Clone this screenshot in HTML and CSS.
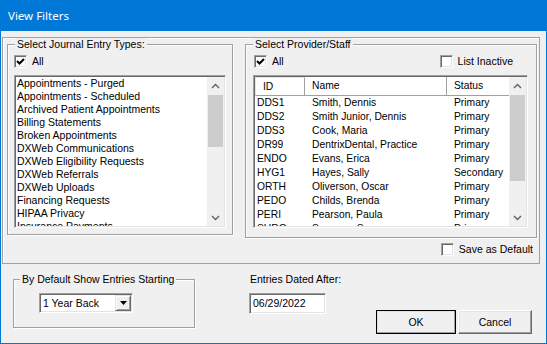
FILE: index.html
```html
<!DOCTYPE html>
<html lang="en">
<head>
    <meta charset="UTF-8">
    <title>View Filters</title>
    <link rel="stylesheet" href="styles.css">
</head>
<body>
    <div class="window">
        <!-- Title bar -->
        <div class="titlebar">View Filters</div>

        <!-- Upper panel with the two lists -->
        <div class="panel">
            <div class="groups">
                <fieldset class="group group-types">
                    <legend>Select Journal Entry Types:</legend>
                    <div class="group-body">
                        <label class="check-row">
                            <span class="check"><svg width="9" height="9" viewBox="0 0 9 9"><path d="M1 4 L3.5 6.5 L8 2" fill="none" stroke="#000" stroke-width="2"/></svg></span>
                            All
                        </label>
                        <div class="listbox">
                            <ul class="list-items">
                                <li>Appointments - Purged</li>
                                <li>Appointments - Scheduled</li>
                                <li>Archived Patient Appointments</li>
                                <li>Billing Statements</li>
                                <li>Broken Appointments</li>
                                <li>DXWeb Communications</li>
                                <li>DXWeb Eligibility Requests</li>
                                <li>DXWeb Referrals</li>
                                <li>DXWeb Uploads</li>
                                <li>Financing Requests</li>
                                <li>HIPAA Privacy</li>
                                <li>Insurance Payments</li>
                            </ul>
                            <div class="scrollbar">
                                <div class="sb-btn"><svg width="9" height="6" viewBox="0 0 9 6"><path d="M1 5 L4.5 1.5 L8 5" fill="none" stroke="#606060" stroke-width="1.4"/></svg></div>
                                <div class="sb-track"><div class="sb-thumb thumb-types"></div></div>
                                <div class="sb-btn"><svg width="9" height="6" viewBox="0 0 9 6"><path d="M1 1 L4.5 4.5 L8 1" fill="none" stroke="#606060" stroke-width="1.4"/></svg></div>
                            </div>
                        </div>
                    </div>
                </fieldset>

                <fieldset class="group group-staff">
                    <legend>Select Provider/Staff</legend>
                    <div class="group-body">
                        <div class="check-line">
                            <label class="check-row">
                                <span class="check"><svg width="9" height="9" viewBox="0 0 9 9"><path d="M1 4 L3.5 6.5 L8 2" fill="none" stroke="#000" stroke-width="2"/></svg></span>
                                All
                            </label>
                            <label class="check-row">
                                <span class="check"></span>
                                List Inactive
                            </label>
                        </div>
                        <div class="listview">
                            <div class="lv-main">
                                <div class="lv-row lv-header">
                                    <div class="lv-head">ID</div>
                                    <div class="lv-head">Name</div>
                                    <div class="lv-head">Status</div>
                                </div>
                                <div class="lv-row"><div>DDS1</div><div>Smith, Dennis</div><div>Primary</div></div>
                                <div class="lv-row"><div>DDS2</div><div>Smith Junior, Dennis</div><div>Primary</div></div>
                                <div class="lv-row"><div>DDS3</div><div>Cook, Maria</div><div>Primary</div></div>
                                <div class="lv-row"><div>DR99</div><div>DentrixDental, Practice</div><div>Primary</div></div>
                                <div class="lv-row"><div>ENDO</div><div>Evans, Erica</div><div>Primary</div></div>
                                <div class="lv-row"><div>HYG1</div><div>Hayes, Sally</div><div>Secondary</div></div>
                                <div class="lv-row"><div>ORTH</div><div>Oliverson, Oscar</div><div>Primary</div></div>
                                <div class="lv-row"><div>PEDO</div><div>Childs, Brenda</div><div>Primary</div></div>
                                <div class="lv-row"><div>PERI</div><div>Pearson, Paula</div><div>Primary</div></div>
                                <div class="lv-row"><div>SURG</div><div>Surgeon, Sam</div><div>Primary</div></div>
                            </div>
                            <div class="scrollbar">
                                <div class="sb-btn"><svg width="9" height="6" viewBox="0 0 9 6"><path d="M1 5 L4.5 1.5 L8 5" fill="none" stroke="#606060" stroke-width="1.4"/></svg></div>
                                <div class="sb-track"><div class="sb-thumb thumb-staff"></div></div>
                                <div class="sb-btn"><svg width="9" height="6" viewBox="0 0 9 6"><path d="M1 1 L4.5 4.5 L8 1" fill="none" stroke="#606060" stroke-width="1.4"/></svg></div>
                            </div>
                        </div>
                    </div>
                </fieldset>
            </div>

            <div class="save-row">
                <label class="check-row">
                    <span class="check"></span>
                    Save as Default
                </label>
            </div>
        </div>

        <!-- Bottom controls -->
        <div class="bottom">
            <fieldset class="group group-start">
                <legend>By Default Show Entries Starting</legend>
                <div class="group-body">
                    <div class="select">
                        <div class="select-value">1 Year Back</div>
                        <div class="select-btn"><svg width="7" height="4" viewBox="0 0 7 4"><path d="M0 0 H7 L3.5 4 Z" fill="#000"/></svg></div>
                    </div>
                </div>
            </fieldset>

            <div class="date-col">
                <div class="date-label">Entries Dated After:</div>
                <div class="textbox">06/29/2022</div>
            </div>

            <div class="buttons">
                <button class="btn btn-ok">OK</button>
                <button class="btn btn-cancel">Cancel</button>
            </div>
        </div>
    </div>
</body>
</html>
```

FILE: styles.css
```css
* {
    margin: 0;
    padding: 0;
    box-sizing: border-box;
}

body {
    font-family: 'Liberation Sans', Arial, sans-serif;
    font-size: 10.5px;
    color: #000;
    background: #fff;
    overflow: hidden;
}

.window {
    width: 547px;
    height: 344px;
    background: #f0f0f0;
    border: 1px solid #0078d7;
    border-top: 0;
    display: flex;
    flex-direction: column;
}

/* Title bar */
.titlebar {
    height: 31px;
    background: #0078d7;
    color: #fff;
    font-family: 'Noto Sans', 'Open Sans', sans-serif;
    font-size: 11.5px;
    line-height: 31px;
    padding-left: 8px;
    margin: 0 -1px;
}

/* Upper panel */
.panel {
    margin: 6px 6px 0 1px;
    border: 1px solid #a0a0a0;
    box-shadow: inset 1px 1px 0 #fff;
    padding: 0 1px 7px 4px;
    height: 227px;
}

.groups {
    display: flex;
    align-items: flex-start;
    gap: 12px;
}

/* Etched group box */
.group {
    border: 1px solid #a0a0a0;
    box-shadow: inset 1px 1px 0 #fff, 1px 1px 0 #fff;
    padding: 0;
    min-width: 0;
}

.group legend {
    margin-left: 7px;
    padding: 0 2px;
    line-height: 13px;
    background: #f0f0f0;
}

.group-types {
    width: 226px;
}

.group-types .group-body {
    padding: 4px 6px 6px;
}

.group-staff {
    width: 292px;
}

.group-staff .group-body {
    padding: 4px 8px 9px 7px;
}

.check-line {
    display: flex;
    justify-content: space-between;
    padding: 0 15px 0 1px;
}

.check-row {
    display: flex;
    align-items: center;
    gap: 5px;
    height: 13px;
    line-height: 13px;
}

.check {
    width: 13px;
    height: 13px;
    background: #fff;
    border: 1px solid;
    border-color: #a0a0a0 #fff #fff #a0a0a0;
    box-shadow: inset 1px 1px 0 #696969, inset -1px -1px 0 #e3e3e3;
    display: flex;
    align-items: center;
    justify-content: center;
}

/* Sunken list boxes */
.listbox,
.listview {
    margin-top: 7px;
    height: 153px;
    display: flex;
    background: #fff;
    border: 1px solid;
    border-color: #a0a0a0 #fff #fff #a0a0a0;
    box-shadow: inset 1px 1px 0 #696969, inset -1px -1px 0 #e3e3e3;
    padding: 1px;
    overflow: hidden;
}

.listbox {
    width: 212px;
}

.list-items {
    list-style: none;
    flex: 1;
    padding-left: 1px;
    overflow: hidden;
}

.list-items li {
    line-height: 13px;
    height: 13px;
    white-space: nowrap;
}

.scrollbar {
    width: 17px;
    flex-shrink: 0;
    background: #f0f0f0;
    display: flex;
    flex-direction: column;
}

.sb-btn {
    height: 17px;
    display: flex;
    align-items: center;
    justify-content: center;
}

.sb-track {
    flex: 1;
}

.sb-thumb {
    background: #cdcdcd;
    margin: 1px 1px 0;
}

.thumb-types {
    height: 52px;
}

.thumb-staff {
    height: 86px;
}

/* List view */
.listview {
    width: 275px;
    font-size: 10.3px;
}

.lv-main {
    flex: 1;
    overflow: hidden;
}

.lv-row {
    display: grid;
    grid-template-columns: 50px 142px 1fr;
    height: 14px;
    line-height: 14px;
    white-space: nowrap;
}

.lv-row div {
    padding-left: 7px;
}

.lv-row div:first-child {
    padding-left: 2px;
}

.lv-header {
    height: 19px;
    line-height: 17px;
    background: #fff;
}

.lv-header .lv-head {
    padding-left: 7px;
    border-right: 1px solid #a0a0a0;
    border-bottom: 1px solid #a0a0a0;
    box-shadow: inset 1px 1px 0 #fff;
}

.lv-header .lv-head:first-child {
    padding-left: 7px;
    border-left: 1px solid #e3e3e3;
    border-top: 1px solid #e3e3e3;
}

.lv-header .lv-head:last-child {
    border-right: 0;
}

.save-row {
    display: flex;
    justify-content: flex-end;
    margin-top: 5px;
    padding-right: 5px;
}

/* Bottom area */
.bottom {
    display: flex;
    align-items: flex-start;
    padding: 9px 14px 0 12px;
}

.group-start {
    width: 182px;
}

.group-start legend {
    margin-left: 6px;
}

.group-start .group-body {
    padding: 7px 0 14px 25px;
}

.select {
    width: 94px;
    height: 20px;
    display: flex;
    background: #fff;
    border: 1px solid;
    border-color: #a0a0a0 #fff #fff #a0a0a0;
    box-shadow: inset 1px 1px 0 #696969, inset -1px -1px 0 #e3e3e3;
    padding: 1px;
}

.select-value {
    flex: 1;
    line-height: 16px;
    padding-left: 2px;
}

.select-btn {
    width: 16px;
    background: #f0f0f0;
    border: 1px solid;
    border-color: #e3e3e3 #696969 #696969 #e3e3e3;
    box-shadow: inset 1px 1px 0 #fff, inset -1px -1px 0 #a0a0a0;
    display: flex;
    align-items: center;
    justify-content: center;
}

.date-col {
    margin-left: 54px;
}

.date-label {
    line-height: 13px;
    padding-left: 1px;
}

.textbox {
    margin-top: 7px;
    width: 77px;
    height: 21px;
    background: #fff;
    border: 1px solid;
    border-color: #a0a0a0 #fff #fff #a0a0a0;
    box-shadow: inset 1px 1px 0 #696969, inset -1px -1px 0 #e3e3e3;
    padding-left: 3px;
    line-height: 18px;
}

.buttons {
    margin-left: auto;
    margin-top: 37px;
    display: flex;
    gap: 2px;
}

.btn {
    height: 24px;
    font-family: inherit;
    font-size: 10.5px;
    background: #f0f0f0;
    border: 1px solid;
    border-color: #fff #696969 #696969 #fff;
    box-shadow: inset -1px -1px 0 #a0a0a0, inset 1px 1px 0 #e3e3e3;
}

.btn-ok {
    width: 80px;
    outline: 1px solid #000;
    outline-offset: -1px;
}

.btn-cancel {
    width: 74px;
}
```
